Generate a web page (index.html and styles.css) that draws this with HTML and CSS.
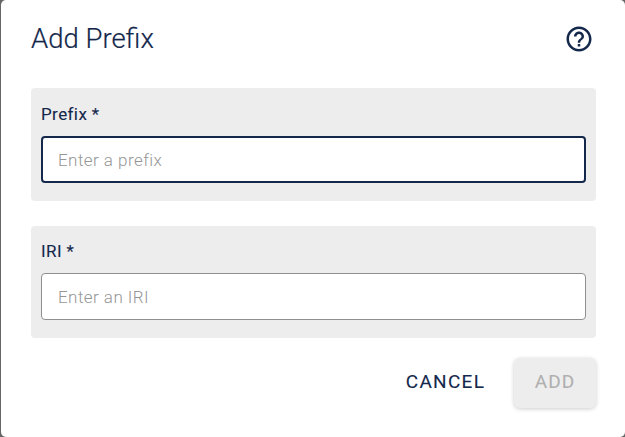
FILE: index.html
```html
<!DOCTYPE html>
<html lang="en">
<head>
<meta charset="utf-8">
<title>Add Prefix</title>
<link rel="stylesheet" href="styles.css">
</head>
<body>
<div class="dialog">
  <header class="head">
    <h2 class="title">Add Prefix</h2>
    <svg class="help" width="30" height="30" viewBox="0 0 24 24" fill="#14284b" aria-hidden="true"><path d="M11 18h2v-2h-2v2zm1-16C6.48 2 2 6.48 2 12s4.48 10 10 10 10-4.48 10-10S17.52 2 12 2zm0 18c-4.41 0-8-3.59-8-8s3.59-8 8-8 8 3.59 8 8-3.59 8-8 8zm0-14c-2.21 0-4 1.79-4 4h2c0-1.1.9-2 2-2s2 .9 2 2c0 2-3 1.75-3 5h2c0-2.25 3-2.5 3-5 0-2.21-1.79-4-4-4z"/></svg>
  </header>
  <section class="field field-first">
    <label class="label" for="prefix">Prefix *</label>
    <input class="input input-focus" id="prefix" placeholder="Enter a prefix">
  </section>
  <section class="field field-second">
    <label class="label" for="iri">IRI *</label>
    <input class="input" id="iri" placeholder="Enter an IRI">
  </section>
  <footer class="actions">
    <button class="btn cancel">CANCEL</button>
    <button class="btn add">ADD</button>
  </footer>
</div>
</body>
</html>
```
FILE: styles.css
```css
* { box-sizing: border-box; }
html, body { margin: 0; height: 100%; }
body { background: #666; overflow: hidden; font-family: Roboto, sans-serif; }
.dialog {
  width: 624px; height: 437px; margin-left: 1px;
  background: #fff; border-radius: 5px;
  padding: 0 29px 0 30px;
}
.head { display: flex; justify-content: space-between; align-items: center; height: 88px; padding-bottom: 11px; }
.title { margin: 0; font-family: Roboto, sans-serif; font-weight: 300; font-size: 27.5px; letter-spacing: 0; color: #14284b; -webkit-text-stroke: .2px #14284b; }
.help { margin-right: 2px; }
.field { background: #ededed; border-radius: 4px; padding: 0 10px; }
.field-first { height: 113px; padding-top: 16px; margin-bottom: 25px; }
.field-second { height: 112px; padding-top: 15px; }
.label { display: block; font-size: 17px; font-weight: 400; letter-spacing: .4px; color: #14284b; line-height: 20px; margin-bottom: 12px; -webkit-text-stroke: .1px #14284b; }
.input {
  display: block; width: 100%; height: 47px; padding: 0 16px;
  font: 300 17px Roboto, sans-serif; letter-spacing: .45px; color: #14284b;
  background: #fff; border: 1px solid #8f8f8f; border-radius: 4px; outline: none;
}
.input::placeholder { color: #969696; opacity: 1; }
.input-focus { border: 2px solid #14284b; padding: 0 15px; }
.actions { display: flex; justify-content: flex-end; align-items: center; gap: 25px; margin-top: 20px; }
.btn { font: 400 19px Roboto, sans-serif; letter-spacing: 1.3px; border: 0; background: none; height: 50px; border-radius: 6px; padding: 0 0 3px; -webkit-text-stroke: .1px currentColor; }
.cancel { color: #14284b; width: 87px; }
.add { color: #b0b0b0; background: #ededed; width: 82px; letter-spacing: 1px; box-shadow: 0 1px 4px rgba(0,0,0,.2); }
```
